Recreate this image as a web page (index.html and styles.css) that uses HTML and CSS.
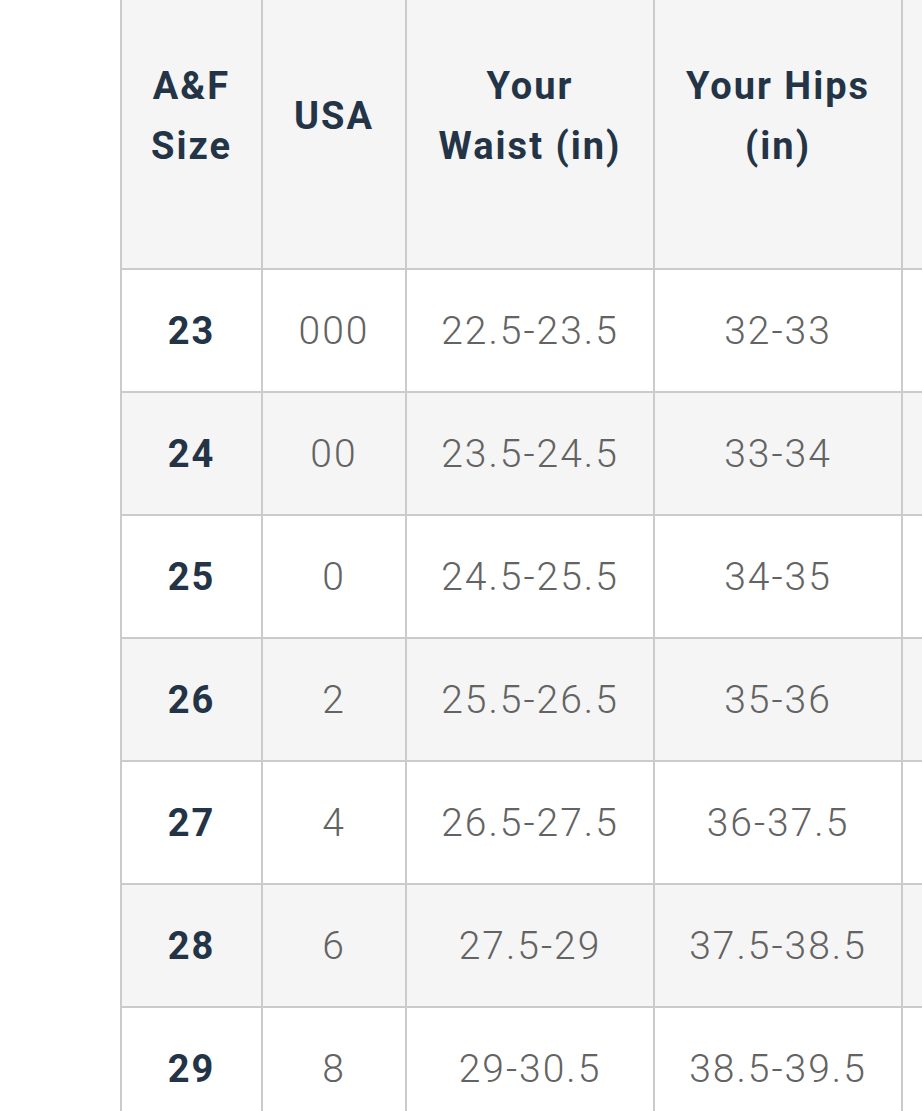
FILE: index.html
```html
<!DOCTYPE html>
<html lang="en">
<head>
<meta charset="utf-8">
<title>Size Chart</title>
<link rel="stylesheet" href="styles.css">
</head>
<body>
<div class="chart-wrap">
  <table class="size-chart">
    <colgroup>
      <col class="c-size">
      <col class="c-usa">
      <col class="c-wide">
      <col class="c-wide">
      <col class="c-wide">
    </colgroup>
    <thead>
      <tr>
        <th>A&amp;F<br>Size</th>
        <th>USA</th>
        <th>Your<br>Waist (in)</th>
        <th>Your Hips<br>(in)</th>
        <th></th>
      </tr>
    </thead>
    <tbody>
      <tr><td class="size">23</td><td>000</td><td>22.5-23.5</td><td>32-33</td><td></td></tr>
      <tr><td class="size">24</td><td>00</td><td>23.5-24.5</td><td>33-34</td><td></td></tr>
      <tr><td class="size">25</td><td>0</td><td>24.5-25.5</td><td>34-35</td><td></td></tr>
      <tr><td class="size">26</td><td>2</td><td>25.5-26.5</td><td>35-36</td><td></td></tr>
      <tr><td class="size">27</td><td>4</td><td>26.5-27.5</td><td>36-37.5</td><td></td></tr>
      <tr><td class="size">28</td><td>6</td><td>27.5-29</td><td>37.5-38.5</td><td></td></tr>
      <tr><td class="size">29</td><td>8</td><td>29-30.5</td><td>38.5-39.5</td><td></td></tr>
    </tbody>
  </table>
</div>
</body>
</html>
```

FILE: styles.css
```css
html, body {
  margin: 0;
  padding: 0;
  background: #ffffff;
}

body {
  font-family: Roboto, "Liberation Sans", sans-serif;
  overflow: hidden;
}

.chart-wrap {
  width: 922px;
  height: 1111px;
  overflow: hidden;
  padding-left: 120px;
  box-sizing: border-box;
}

.size-chart {
  table-layout: fixed;
  border-collapse: separate;
  border-spacing: 0;
  width: 1031px;
  border-left: 2px solid #cbcbcb;
}

.c-size { width: 141px; }
.c-usa { width: 144px; }
.c-wide { width: 248px; }

.size-chart th,
.size-chart td {
  border-right: 2px solid #cbcbcb;
  border-bottom: 2px solid #cbcbcb;
  text-align: center;
  vertical-align: middle;
  letter-spacing: 2px;
}

.size-chart th {
  background: #f5f5f5;
  color: #243447;
  font-weight: 700;
  font-size: 38px;
  line-height: 60px;
  height: 232px;
  padding: 0 0 36px 0;
}

.size-chart td {
  height: 121px;
  padding: 0;
  font-size: 39px;
  font-weight: 300;
  color: #636363;
}

.size-chart tbody tr:nth-child(even) td {
  background: #f5f5f5;
}

.size-chart td.size {
  color: #243447;
  font-weight: 700;
  font-size: 38px;
}
```
